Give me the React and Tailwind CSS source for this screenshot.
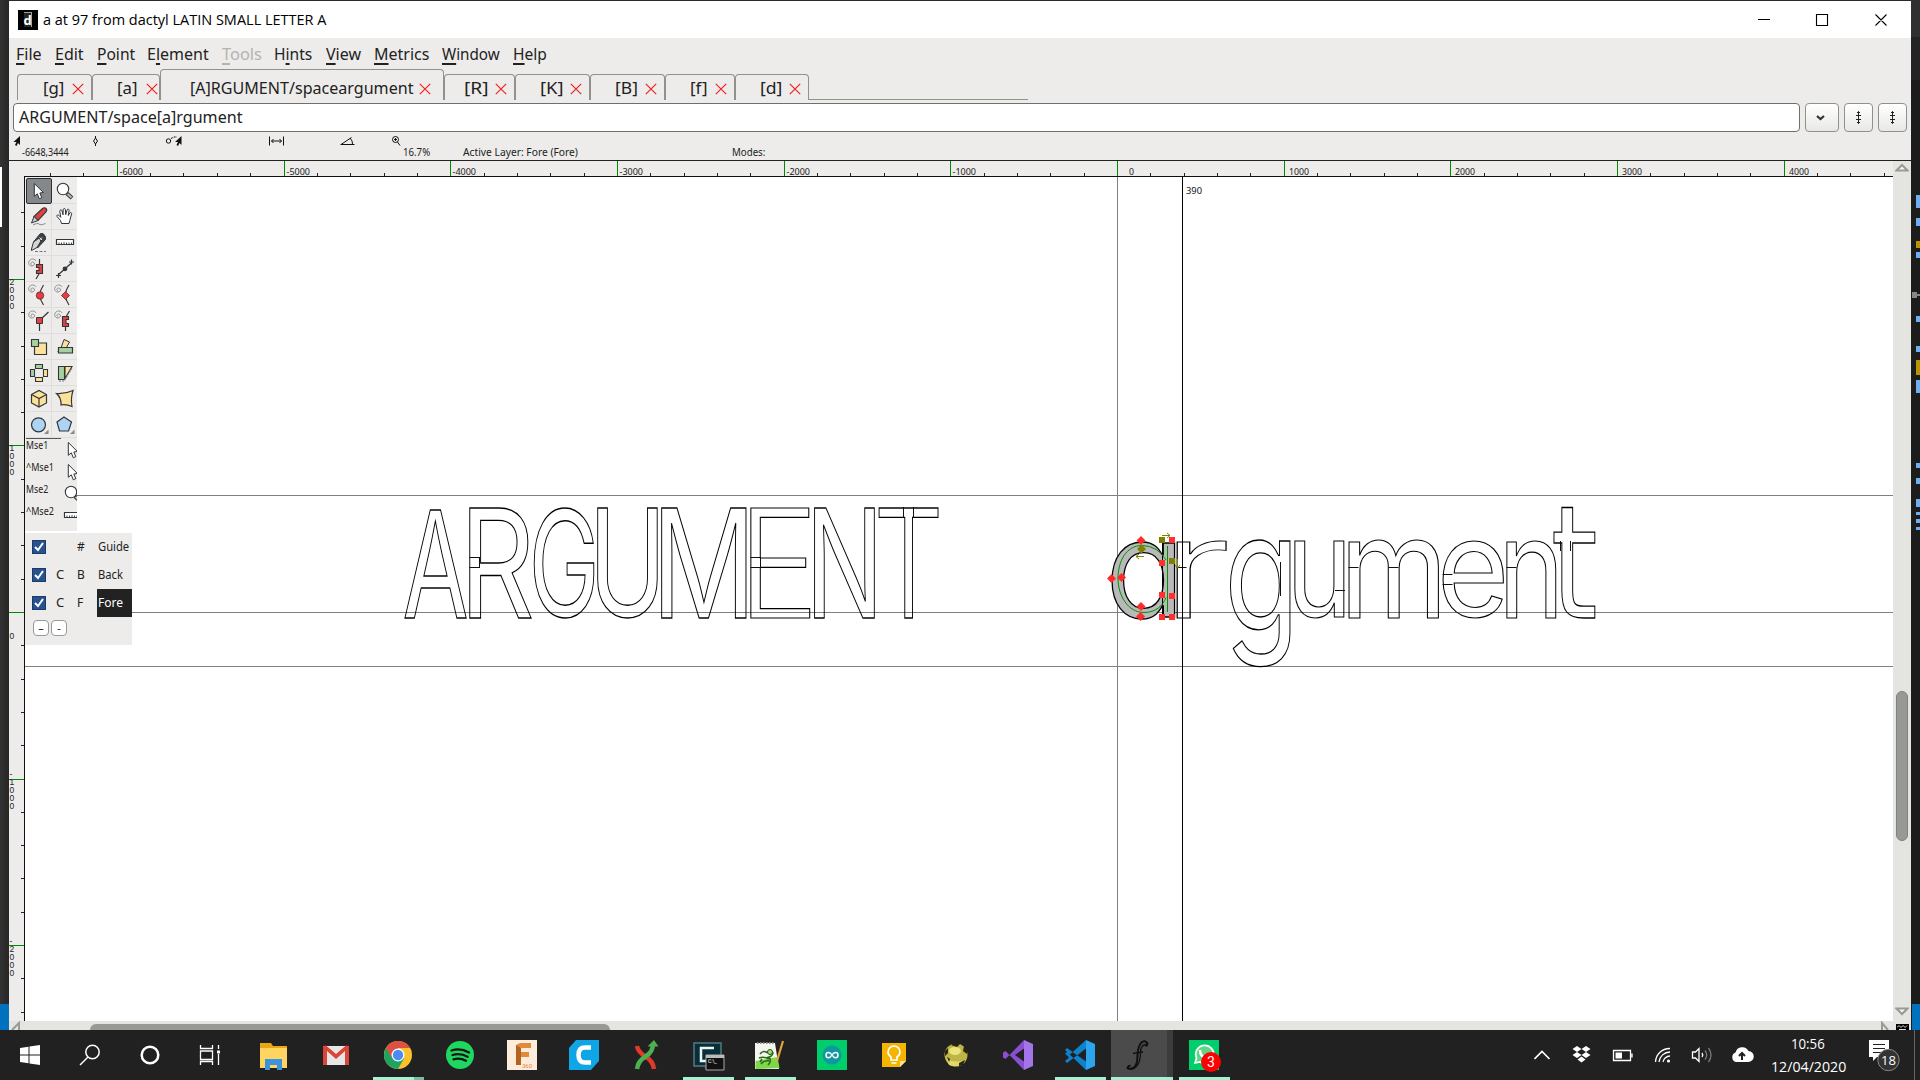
import React, { useLayoutEffect, useRef, useState } from "react";

const UI = "font-['Noto_Sans','DejaVu_Sans',sans-serif]";
const SEGOE = "font-['Open_Sans','Noto_Sans',sans-serif]";

/* Single-line label condensed or widened to fill its own box. */
function Fit({ className, children }) {
  const box = useRef(null);
  const inner = useRef(null);
  const [s, setS] = useState(1);
  useLayoutEffect(() => {
    setS(box.current.clientWidth / inner.current.offsetWidth);
  }, []);
  return (
    <span ref={box} className={"block shrink-0 whitespace-nowrap " + className}>
      <span ref={inner} className="inline-block origin-left" style={{ transform: `scaleX(${s})` }}>
        {children}
      </span>
    </span>
  );
}

/* ---------- title bar ---------- */
function TitleBar() {
  return (
    <div className={"flex h-[37px] shrink-0 items-center bg-white pl-[9px] " + SEGOE}>
      <div className="flex h-5 w-5 items-center justify-center bg-black">
        <div className="flex h-[15px] w-2 items-center justify-center border-r border-t border-gray-400 bg-neutral-800 text-[13px] font-bold leading-none text-white">d</div>
      </div>
      <Fit className="ml-[5px] w-[283px] text-[15px] text-black">a at 97 from dactyl LATIN SMALL LETTER A</Fit>
      <svg className="ml-auto mr-[23px]" width="132" height="14" viewBox="0 0 132 14" fill="none" stroke="#000" strokeWidth="1.1">
        <path d="M2 6.5h12M60.500 1.500h11v11h-11zM119.500 1.500l11 11M130.500 1.500l-11 11" />
      </svg>
    </div>
  );
}

/* ---------- menu ---------- */
const MENU = [
  ["", "F", "ile", "w-[26px]"],
  ["", "E", "dit", "ml-[13px] w-[29px]"],
  ["", "P", "oint", "ml-[13px] w-[38px]"],
  ["E", "l", "ement", "ml-[12px] w-[62px]"],
  ["", "T", "ools", "ml-[13px] w-[40px] text-[#b4b3b1]"],
  ["H", "i", "nts", "ml-[12px] w-[38px]"],
  ["", "V", "iew", "ml-[14px] w-[35px]"],
  ["", "M", "etrics", "ml-[13px] w-[55px]"],
  ["", "W", "indow", "ml-[13px] w-[58px]"],
  ["", "H", "elp", "ml-[13px] w-[34px]"],
];
function MenuBar() {
  return (
    <div className={"flex h-[31px] shrink-0 items-center pl-[7px] text-[16px] text-[#222] " + UI}>
      {MENU.map(([a, b, c, cls]) => (
        <Fit key={a + b + c} className={cls}>
          {a}
          <span className="underline decoration-2 underline-offset-[3px]">{b}</span>
          {c}
        </Fit>
      ))}
    </div>
  );
}

/* ---------- tabs ---------- */
const TABS = [
  ["[g]", "w-[75px] pl-[25px]", "w-[21px]", "ml-[8px]"],
  ["[a]", "w-[68px] pl-[24px]", "w-[21px]", "ml-[8px]"],
  ["[A]RGUMENT/spaceargument", "w-[284px] pl-[29px]", "w-[223px]", "ml-[6px]"],
  ["[R]", "w-[71px] pl-[19px]", "w-[24px]", "ml-[7px]"],
  ["[K]", "w-[75px] pl-[24px]", "w-[23px]", "ml-[7px]"],
  ["[B]", "w-[75px] pl-[24px]", "w-[23px]", "ml-[7px]"],
  ["[f]", "w-[70px] pl-[24px]", "w-[18px]", "ml-[7px]"],
  ["[d]", "w-[74px] pl-[24px]", "w-[22px]", "ml-[7px]"],
];
function Tabs() {
  return (
    <div className={"flex h-[31px] shrink-0 items-end pl-[8px] text-[16px] text-[#222] " + UI}>
      {TABS.map(([t, w, tw, m]) => (
        <div
          key={t}
          className={
            "flex shrink-0 items-center rounded-t border border-b-0 border-[#91918e] " +
            w + (t.length > 5 ? " h-[31px] pt-[5px]" : " h-[26px]")
          }
        >
          <Fit className={"leading-[22px] " + tw}>{t}</Fit>
          <svg className={"mt-[3px] shrink-0 " + m} width="12" height="12" viewBox="0 0 12 12" stroke="#ef2020" strokeWidth="1.200">
            <path d="M.8.8l10.400 10.400M11.200.8L.8 11.200" />
          </svg>
        </div>
      ))}
      <div className="h-px w-[219px] bg-[#91918e]" />
    </div>
  );
}

function WordButton({ className, children }) {
  return (
    <div className={"flex h-[29px] shrink-0 items-center justify-center rounded-[4px] border border-[#90908d] bg-gradient-to-b from-white to-[#e8e8e6] " + className}>
      {children}
    </div>
  );
}
function DoubleDagger() {
  return (
    <svg width="9" height="13" viewBox="0 0 9 13" fill="none" stroke="#222" strokeWidth="1">
      <path d="M4.500.5v12M3 2l1.500-1.500L6 2M2 4.500h5M2 8.500h5M3 11l1.500 1.500L6 11" />
    </svg>
  );
}
function WordBar() {
  return (
    <div className={"flex h-[33px] shrink-0 items-center pl-[4px] text-[16px] text-[#222] " + UI}>
      <div className="flex h-[29px] w-[1787px] shrink-0 items-center rounded-[4px] border border-[#6f6f6f] bg-white pl-[5px]">
        <Fit className="w-[223px] pb-px leading-[25px]">ARGUMENT/space[a]rgument</Fit>
      </div>
      <WordButton className="ml-[5px] w-[34px]">
        <svg className="mr-[3px]" width="9" height="6" viewBox="0 0 9 6" fill="none" stroke="#2e3436" strokeWidth="2.200"><path d="M1 1l3.500 3L8 1" /></svg>
      </WordButton>
      <WordButton className="ml-[5px] w-[29px]"><DoubleDagger /></WordButton>
      <WordButton className="ml-[5px] w-[29px]"><DoubleDagger /></WordButton>
    </div>
  );
}

/* ---------- info line ---------- */
function InfoBar() {
  return (
    <div className={"flex h-[27px] shrink-0 flex-col border-b border-[#222] text-[10px] leading-[12px] text-[#222] " + UI}>
      <svg className="h-[12px] w-[500px] shrink-0" viewBox="9 135 500 12" fill="none" stroke="#111" strokeWidth="1">
        <path d="M20 137v9l-2-2-1.500 3-1.500-1 1.500-3h-3z" fill="#111" stroke="none" />
        <path d="M95.500 137v2M95.500 145v2M93.500 142l2-3 2 3-2 3z" />
        <circle cx="168.500" cy="142" r="2.200" />
        <path d="M171 139.500l3-1.500h3" strokeDasharray="2 1" />
        <path d="M181.500 137v9l-2-2-1.500 3-1.500-1 1.500-3h-3z" fill="#111" stroke="none" />
        <path d="M269.500 137.500v9M283.500 137.500v9M271.500 142h10M273.500 140l-2 2 2 2M279.500 140l2 2-2 2" />
        <path d="M340.500 145.500h14M341 145.500l10.500-7M350 139q3 3 2.500 6.500" />
        <circle cx="395.500" cy="140.500" r="3" />
        <path d="M394 140.500h3M395.500 139v3M397.500 143l2.500 3.500" />
      </svg>
      <div className="flex pl-[13px]">
        <Fit className="w-[47px]">-6648,3444</Fit>
        <Fit className="ml-[334px] w-[27px]">16.7%</Fit>
        <Fit className="ml-[33px] w-[115px]">Active Layer: Fore (Fore)</Fit>
        <Fit className="ml-[154px] w-[33px]">Modes:</Fit>
      </div>
    </div>
  );
}

/* ---------- rulers ---------- */
const STEP = 166.7;
function TopRuler() {
  const minors = [];
  for (let i = -32; i <= 23; i++) if (i % 5 !== 0) minors.push(Math.round(1117 + (i * STEP) / 5) + 0.5);
  return (
    <svg className="h-4 w-[1884px] shrink-0" viewBox="9 161 1884 16">
      <path d={minors.map((x) => `M${x} 173v3`).join("")} stroke="#222" />
      <path d="M24 176.500H1893" stroke="#111" />
      {[-6, -5, -4, -3, -2, -1, 0, 1, 2, 3, 4].map((k) => {
        const x = Math.round(1117 + k * STEP);
        return (
          <g key={k}>
            <path d={`M${x + 0.5} 161v15`} stroke="#008a00" />
            <text x={k < 0 ? x + 2.500 : k === 0 ? x + 12 : x + 5} y="175" textLength={k < 0 ? 23.500 : k === 0 ? 5 : 20} lengthAdjust="spacingAndGlyphs" className={"text-[9.500px] " + UI} fill="#222">
              {k * 1000}
            </text>
          </g>
        );
      })}
    </svg>
  );
}
function SideRuler() {
  const minors = [];
  for (let i = -12; i <= 13; i++) if (i % 5 !== 0) minors.push(Math.round(612 + (i * 166.5) / 5) + 0.5);
  const labels = [["2000", 285], ["1000", 451], ["0", 639], ["-1000", 777], ["-2000", 944]];
  return (
    <svg className="h-full w-4 shrink-0" viewBox="9 177 16 844">
      <path d={minors.map((y) => `M21 ${y}h3`).join("")} stroke="#222" />
      <path d="M24.500 176V1021" stroke="#111" />
      {[279, 445, 612, 779, 945].map((y) => <path key={y} d={`M9 ${y + 0.5}h15`} stroke="#008a00" />)}
      {labels.map(([t, y]) => t.split("").map((c, i) => (
        <text key={t + i} x="9.500" y={y + i * 8} className="font-['Liberation_Sans',sans-serif] text-[8.500px]" fill="#222">{c}</text>
      )))}
    </svg>
  );
}

/* ---------- glyph canvas ---------- */
/* [char, ink left, ink top, ink right, ink bottom, face] in canvas pixels */
const FACES = {
  caps: { font: "400 150px Inter", cls: "font-['Inter',sans-serif] text-[150px] font-normal" },
  wide: { font: "350 150px Inter", cls: "font-['Inter',sans-serif] text-[150px] font-[350]" },
  small: { font: "380 150px Inter", cls: "font-['Inter',sans-serif] text-[150px] font-[380]" },
  tall: { font: "400 150px 'DejaVu Sans'", cls: "font-['DejaVu_Sans',sans-serif] text-[150px] font-normal" },
};
const GLYPHS = [
  ["A", 404.5, 509.5, 466.5, 617.5, "caps"],
  ["R", 469.5, 507.5, 531, 617.5, "caps"],
  ["G", 533.5, 507, 594, 617.5, "caps"],
  ["U", 597.5, 507.5, 657.5, 617.5, "caps"],
  ["M", 661.5, 507.5, 746.5, 617.5, "caps"],
  ["E", 750.5, 507.5, 810.5, 617.5, "wide"],
  ["N", 814.5, 507.5, 874.5, 617.5, "caps"],
  ["T", 878.5, 507.5, 938.5, 617.5, "wide"],
  ["r", 1176.5, 540.5, 1227, 617.5, "wide"],
  ["g", 1230, 540.5, 1290.5, 667.5, "small"],
  ["u", 1294.5, 540.5, 1344.5, 617.5, "small"],
  ["m", 1348.5, 540, 1438.5, 617.5, "small"],
  ["e", 1442.5, 541, 1504, 617.5, "small"],
  ["n", 1506.5, 540, 1556.5, 617.5, "small"],
  ["t", 1554, 507.5, 1595.5, 618, "tall"],
];
function Outline({ g }) {
  const [c, l, t, r, b, face] = g;
  const [m, setM] = useState(null);
  useLayoutEffect(() => {
    const ctx = document.createElement("canvas").getContext("2d");
    ctx.font = FACES[face].font;
    setM(ctx.measureText(c));
  }, [c, face]);
  if (!m) return null;
  const w = m.actualBoundingBoxRight + m.actualBoundingBoxLeft;
  const h = m.actualBoundingBoxAscent + m.actualBoundingBoxDescent;
  const sx = (r - l) / w;
  const sy = (b - t) / h;
  const tx = l + m.actualBoundingBoxLeft * sx;
  const ty = t + m.actualBoundingBoxAscent * sy;
  return (
    <text transform={`translate(${tx} ${ty}) scale(${sx} ${sy})`} className={FACES[face].cls} fill="none" stroke="#000" strokeWidth={1.100 / Math.sqrt(sx * sy)}>
      {c}
    </text>
  );
}
const DIAMONDS = [[1141, 540.5], [1111.5, 578.5], [1121.5, 577.5], [1141, 606.500], [1140.500, 616.500]];
const SQUARES = [[1172, 540], [1162, 563], [1162, 595], [1172, 596], [1162, 617], [1172, 617]];
function GlyphCanvas() {
  return (
    <svg className="block h-[844px] w-[1868px]" viewBox="25 177 1868 844">
      <path d="M25 495.500H1893M25 612.500H1893M25 666.500H1893M1117.500 177V1021" stroke="#808080" fill="none" />
      {GLYPHS.map((g, i) => <Outline key={i} g={g} />)}
      {/* seams where component contours overlap */}
      <path
        d="M469.500 557.500h10M469.500 567.500h10M479.500 557v11M750.500 557.500h10M750.500 567.500h10M760.500 557v11M903.500 507v11M913.500 507v11M1176.500 567.500h10M1335 590.500h10M1348.500 567.500h10M1388.500 567.500h10M1442.500 574.500h10M1442.500 584.500h10M1506.500 567.500h10M1560.500 541v10M1570.500 541v10M1280.500 562v34"
        fill="none"
        stroke="#111"
      />
      <text transform="translate(1105.500 616.500) scale(.86 .905)" className="font-['Inter',sans-serif] text-[150px] font-[380] [font-feature-settings:'cv11']" fill="#b9b9b9" stroke="#000" strokeWidth="1.500">a</text>
      <path d="M1162.500 541v76" stroke="#000" />
      <g fill="none" stroke="#009000">
        <path d="M1167.500 546v66M1166 560q-8-14-24-14.500c-16 0-24 16-24 33s10 34 26 34c12 0 19-7 22-15" />
      </g>
      {DIAMONDS.map(([x, y], i) => <path key={i} d={`M${x - 4.500} ${y}l4.500-4.500 4.500 4.500-4.500 4.500z`} fill="#ff2a2a" />)}
      {SQUARES.map(([x, y], i) => <rect key={i} x={x - 3} y={y - 3} width="6" height="6" fill="#ff3030" />)}
      <g fill="#808000">
        <rect x="1159" y="537" width="6" height="6" />
        <rect x="1169" y="558" width="6" height="6" />
        <path d="M1137 549l4.500-4.500 4.500 4.500-4.500 4.500z" />
      </g>
      <path d="M1162 535.500h8M1167 533l3 2.500-3 2.500M1144 556.500h-8M1139 554l-3 2.500 3 2.500M1177.500 559v9M1175 565l2.500 3 2.500-3" fill="none" stroke="#808000" />
      <path d="M1182.500 177V1021" stroke="#000" />
      <text x="1186" y="194" textLength="16" lengthAdjust="spacingAndGlyphs" className={"text-[9.500px] " + UI} fill="#111">390</text>
    </svg>
  );
}

/* ---------- tool palette ---------- */
const D = "#30363a";
const Spiral = () => <path d="M6 8.500c-1.500 0-1.500-2.500.5-2.500 3 0 2.500 4-.5 4-4.500 0-4.500-6.500.5-7 2 0 3 1 3.500 2" fill="none" stroke="#8b9294" strokeWidth="1" />;
const Arrow = () => <path d="M8.300 5.500v12.800l3-2.500 2 5 2.500-1.200-2-4.600 3.600-.5z" fill="#fff" stroke={D} />;
const Magnifier = () => (
  <g stroke={D}>
    <path d="M15 15.500l5 4.500" strokeWidth="4" />
    <path d="M15.500 16l4 3.600" stroke="#babdb6" strokeWidth="2" />
    <circle cx="11" cy="11" r="5.700" fill="#fff" strokeWidth="1.100" />
  </g>
);
const Ruler = () => (
  <g stroke={D}>
    <path d="M4.500 9.500h17v5h-17z" fill="#fff" strokeWidth="1.200" />
    <path d="M7 14.500v-2M9.500 14.500v-2M12 14.500v-2.500M14.500 14.500v-2M17 14.500v-2M19.500 14.500v-2" strokeWidth=".9" />
  </g>
);
const TOOLS = [
  <Arrow />,
  <Magnifier />,
  <g stroke={D}><path d="M8 12.500l8.500-8q2-1.500 3.500 0t0 3.500l-8 8.500z" fill="#e04040" strokeWidth="1.100" /><path d="M8 12.500l-2.500 6.500 6.500-2.500z" fill="#c9ccc8" /><path d="M7 21c3-1.500 5-2 6-1s3 1 6.500-.5" fill="none" stroke="#888" /></g>,
  <path d="M9.500 19.500l-1-3-3.500-4c-.8-1.300 1-2 1.800-1.200l2 2-1-6c-.2-1.700 1.800-2 2.200-.5l1 4 .2-5.300c.2-1.300 2-1.300 2.200 0l.3 5.200 1.400-4.700c.5-1.300 2.200-.9 2 .5l-.8 5 1.500-2.500c.8-1 2.200-.3 1.800.8l-1.800 6.700-.8 3z" fill="#fff" stroke={D} />,
  <g stroke={D}><path d="M7.500 12L14 4q2-1.500 4 .5t1.500 5l-8 8.500z" fill="#3c4144" /><path d="M7.500 12l-2 7v1.500l5.500-3L15 11l-2.500-2.500z" fill="#d5d6d3" /><path d="M13.500 7.500l2.500 2.500M16 7.500l-2.500 2.500" stroke="#eee" /><path d="M9 21.500h11" strokeDasharray="3 1.500" stroke="#777" /></g>,
  <Ruler />,
  <g stroke={D}><Spiral /><path d="M13.500 3v6M13.500 17l-3.500 6" fill="none" strokeWidth="1.200" /><path d="M10.500 8.500h6v9h-6v-3h2.500v-3h-2.500z" fill="#e04040" strokeWidth="1.100" /></g>,
  <g stroke={D} strokeWidth="1.200" fill="none"><path d="M6 19L20 6.500" /><path d="M17 6h5M19.500 3.500v5M4 19.500h5M6.500 17v5" /><circle cx="13" cy="12.800" r="1.800" fill={D} /></g>,
  <g stroke={D} strokeWidth="1.200"><Spiral /><path d="M17.500 3q-7 10 0 20" fill="none" /><circle cx="14" cy="13.500" r="3.700" fill="#e04040" stroke="#7a2c2c" strokeWidth=".9" /></g>,
  <g stroke={D} strokeWidth="1.200"><Spiral /><path d="M17 3q-7 10 0 20" fill="none" /><path d="M9.500 13.500l4-4 4 4-4 4z" fill="#e04040" stroke="#7a2c2c" strokeWidth=".9" /></g>,
  <g stroke={D} strokeWidth="1.200"><Spiral /><path d="M22.500 4L15 11M13.500 14v9" fill="none" /><path d="M10.500 9.500h6v6h-6z" fill="#e04040" strokeWidth="1" /></g>,
  <g stroke={D} strokeWidth="1.200"><Spiral /><path d="M17.500 3l-3 5M13.500 19v4" fill="none" /><path d="M10.500 8.500h6v3h-2.500v4h2.500v3h-6z" fill="#e04040" strokeWidth="1.100" /></g>,
  <g stroke={D}><path d="M8.500 9h12v11.500h-12z" fill="#fce19b" strokeWidth="1.200" /><path d="M5.500 5.500h7v7h-7z" fill="#a6cfa2" strokeWidth="1.100" /></g>,
  <g stroke={D}><path d="M12 5.500l5.500 2.500-4.500 8-4-2z" fill="#fce19b" /><path d="M9 14l-4 4.500" fill="none" strokeDasharray="2 1" /><path d="M6.500 13.500h14v5.500h-14z" fill="#a6cfa2" strokeWidth="1.200" /></g>,
  <g stroke={D} strokeWidth="1.100"><path d="M9.500 4.500h7v4h-7zM4.500 9.500h4v7h-4z" fill="#a6cfa2" /><path d="M17.500 9.500h4v7h-4zM9.500 17.500h7v4h-7z" fill="#fce19b" /></g>,
  <g stroke={D} strokeWidth="1.100"><path d="M6.500 6.500h6v13h-6z" fill="#a6cfa2" /><path d="M13 6.500h7l-7 12z" fill="#fce19b" /><path d="M7 21h5l8-13" fill="none" strokeDasharray="2 1" stroke="#777" /></g>,
  <g stroke={D} strokeWidth="1.200" fill="#fce19b"><path d="M5.500 8.500l7.500-4 7.500 4v8.500l-7.500 4-7.500-4z" /><path d="M5.500 8.500l7.500 4 7.500-4M13 12.500V21" fill="none" /></g>,
  <path d="M4.500 7.500q9 .5 16.500-3-2.500 8-1 16-6-2.500-11-1.500.5-7-4.500-11.500z" fill="#fce19b" stroke={D} strokeWidth="1.200" />,
  <g><circle cx="12.500" cy="12.800" r="7" fill="#aed4f5" stroke={D} strokeWidth="1.200" /><path d="M22.500 17.500v4.500h-4.500z" fill="#888" /></g>,
  <g><path d="M12 5l7.500 5-3 9h-9l-2.500-9z" fill="#aed4f5" stroke={D} strokeWidth="1.200" /><path d="M22.500 17.500v4.500h-4.500z" fill="#888" /></g>,
];
const MOUSE = [["Mse1", <Arrow />], ["^Mse1", <Arrow />], ["Mse2", <Magnifier />], ["^Mse2", <Ruler />]];
function ToolPalette() {
  return (
    <div className={"absolute left-0 top-0 h-[354px] w-[52px] overflow-hidden bg-[#edeceb] pl-px pt-px text-[10px] text-[#222] " + UI}>
      <div className="grid w-[52px] grid-cols-2">
        {TOOLS.map((t, i) => (
          <div key={i} className={"h-[26px] w-[26px] " + (i === 0 ? "rounded-[2px] border border-[#2c3033] bg-[#84888b]" : "border-b border-r border-[#dfdedc]")}>
            <svg className={i === 0 ? "-m-px h-[26px] w-[26px]" : "h-[26px] w-[26px]"} viewBox="0 0 26 26">{t}</svg>
          </div>
        ))}
      </div>
      <div className="h-px w-[35px] bg-[#555]" />
      {MOUSE.map(([t, icon], i) => (
        <div key={i} className="flex h-[22px] w-[60px] items-start">
          <Fit className={t[0] === "^" ? "w-[28px] leading-[12px]" : "w-[22px] leading-[12px]"}>{t}</Fit>
          <svg className={"-mt-[2px] h-[26px] w-[26px] shrink-0 " + (t[0] === "^" ? "ml-[6px]" : "ml-[12px]")} viewBox="0 0 26 26">{icon}</svg>
        </div>
      ))}
    </div>
  );
}

/* ---------- layers ---------- */
const LAYERS = [["", "#", "Guide"], ["C", "B", "Back"], ["C", "F", "Fore"]];
function Layers() {
  return (
    <div className={"absolute left-0 top-[356px] flex h-[112px] w-[107px] flex-col bg-[#edeceb] text-[13px] text-[#222] " + UI}>
      {LAYERS.map(([c, b, name]) => (
        <div key={name} className="flex h-7 shrink-0 items-center pl-[7px]">
          <div className="flex h-[14px] w-[14px] items-center justify-center border border-[#1b3a66] bg-[#27518f]">
            <svg width="10" height="10" viewBox="0 0 10 10" fill="none" stroke="#fff" strokeWidth="2"><path d="M1 5l3 3 5-7" /></svg>
          </div>
          <span className="w-[30px] pl-[10px]">{c}</span>
          <span className="w-[21px] pl-px text-[12px]">{b}</span>
          <div className={"flex h-7 w-[35px] items-center pl-px " + (name === "Fore" ? "bg-[#222] text-white" : "")}>
            <Fit className={name === "Guide" ? "w-[31px]" : "w-[25px]"}>{name}</Fit>
          </div>
        </div>
      ))}
      <div className="flex gap-[2px] pl-[8px] pt-[3px]">
        <div className="flex h-4 w-4 items-center justify-center rounded-[4px] border border-[#999] bg-white pb-[2px] text-[11px] leading-none">–</div>
        <div className="flex h-4 w-4 items-center justify-center rounded-[4px] border border-[#999] bg-white pb-[2px] text-[11px] leading-none">-</div>
      </div>
    </div>
  );
}

/* ---------- editor strip at the window's right side ---------- */
const MARKS = [
  "mt-[195px] h-[13px] bg-[#6cb0f0]", "mt-[10px] h-[8px] bg-[#6cb0f0]", "mt-[15px] h-[7px] bg-[#b89500]", "mt-[4px] h-[6px] bg-[#6cb0f0]",
  "mt-[36px] h-[2px] bg-[#888]", "mt-[20px] h-[6px] bg-[#6cb0f0]", "mt-[24px] h-[6px] bg-[#6cb0f0]", "mt-[8px] h-[15px] bg-[#b89500]", "mt-[5px] h-[13px] bg-[#6cb0f0]",
  "mt-[70px] h-[5px] bg-[#6cb0f0]", "mt-[10px] h-[6px] bg-[#6cb0f0]", "mt-[15px] h-[8px] bg-[#6cb0f0]", "mt-[5px] h-[3px] bg-[#6cb0f0]", "mt-[4px] h-[4px] bg-[#6cb0f0]", "mt-[4px] h-[3px] bg-[#6cb0f0]",
];

/* ---------- taskbar ---------- */
const APPS = [
  { n: "files", i: <g><path d="M4 6h11l2 3H31v22H4z" fill="#e8a713" /><path d="M4 11H31v20H4z" fill="#ffd461" /><path d="M9 22h17v11h-5v-5h-7v5H9z" fill="#3c93dd" /></g> },
  { n: "mail", i: <g><path d="M5 9h26v19H5z" fill="#e6e6e6" /><path d="M5 9v19h4V14l9 8 9-8v14h4V9l-3-.5-10 8.500L8 8.500z" fill="#db4437" /></g> },
  { n: "browser", u: "split", i: <g><circle cx="18" cy="18" r="14" fill="#fbc02d" /><path d="M18 18L5.900 11A14 14 0 0 1 30.100 11H18z" fill="#dd5144" /><path d="M18 18L5.900 11A14 14 0 0 0 18 32l6-10.500z" fill="#1da462" /><path d="M5.900 11A14 14 0 0 1 30.100 11H18L12 21z" fill="#dd5144" /><circle cx="18" cy="18" r="6.500" fill="#fff" /><circle cx="18" cy="18" r="5.200" fill="#4c8bf5" /></g> },
  { n: "music", i: <g><circle cx="18" cy="18" r="14" fill="#1ed760" /><path d="M9.500 13.500q9-2.800 17.500 2M10.500 18q8-2.300 15 1.800M11.500 22.300q6.500-1.800 12.500 1.500" fill="none" stroke="#191414" strokeWidth="2.300" strokeLinecap="round" /></g> },
  { n: "cad", i: <g><path d="M3 3h30v30H3z" fill="#fdebdc" /><path d="M12 8l4-2h11v5H17v4h8v5h-8v8h-5z" fill="#e08a3a" /><path d="M12 8l5 3v17h-5z" fill="#b5621f" /><text x="18" y="31" className="font-['Roboto',sans-serif] text-[6px]" fill="#e08a3a">360</text></g> },
  { n: "slicer", i: <g><path d="M10 3h23v21l-8 9H3V11z" fill="#0fa5e6" /><path d="M25 10.500h-6q-6.500 0-6.500 7.500t6.500 7.500h6" fill="none" stroke="#fff" strokeWidth="4.500" /></g> },
  { n: "helix", i: <g fill="none" strokeWidth="4.500"><path d="M9 9q1 6 8.500 10.500T26 32" stroke="#e03a2a" /><path d="M9 32q1-8 8.500-12.500T25 7" stroke="#4caf50" /><path d="M19.500 9.500L26 3l4.500 6.500z" fill="#4caf50" stroke="none" /></g> },
  { n: "recorder", u: "full", i: <g><path d="M4 6h27v23H4z" fill="#0a2e38" stroke="#4e7b86" strokeWidth="1.500" /><path d="M24 11H11v13h6" fill="none" stroke="#e7f5f5" strokeWidth="2.500" /><path d="M15 31h8" stroke="#4e7b86" strokeWidth="1.500" /><path d="M16 18h18v15H16z" fill="#111" stroke="#aaa" /><path d="M16 18h18v3H16z" fill="#bbb" /><text x="18" y="26" className="font-['Roboto',sans-serif] text-[5px]" fill="#fff">C:\_</text></g> },
  { n: "notes", u: "full", i: <g transform="translate(-1 0)"><path d="M4 6h20l4 26H4z" fill="#f4f4f0" /><path d="M4.500 24l22-4 2 11-24 1z" fill="#7fd64a" /><path d="M6 6h18" stroke="#888" strokeWidth="2" strokeDasharray="1.500 1.500" /><path d="M9 17q3-4 7-1.500 3-3 6 .5-1 4-6 4.500M8 21q5-2 10 1M10 27q3-4 8-3M18 20q3 4-1 8M11 22l-2 3" fill="none" stroke="#2c6a18" strokeWidth="1.600" /><circle cx="19" cy="15" r="2.500" fill="#9fe070" stroke="#25531a" /><path d="M32 4l-6 20" stroke="#e3a33a" strokeWidth="2.200" /></g> },
  { n: "arduino", i: <g><path d="M3 3h30v30H3z" fill="#00ce6d" /><circle cx="18" cy="18" r="9.500" fill="#11989f" /><path d="M18 18c-2-3.500-6-3.500-6 0s4 3.500 6 0 6-3.500 6 0-4 3.500-6 0z" fill="none" stroke="#fff" strokeWidth="1.500" /></g> },
  { n: "keep", i: <g><path d="M6 6h24v18l-6 6H6z" fill="#f5b400" /><path d="M30 24h-6v6z" fill="#ffe29a" /><path d="M15 23v-3q-3-2-3-5a6 6 0 0 1 12 0q0 3-3 5v3zM15.500 26h5" fill="none" stroke="#fff" strokeWidth="1.700" /></g> },
  { n: "ball", i: <g><circle cx="18" cy="18" r="11.500" fill="#bdb548" /><ellipse cx="17" cy="14" rx="6" ry="4" fill="#e9e47c" /><path d="M8 21q6 5 16 3v3q-6 4-13 1z" fill="#e0d96a" /><path d="M13 8q3-4 9-1l-3 3zM26 9l4 3-1 5-4-3zM7 14l3-3v5l-3 3zM9 20l3 2-1 3zM21 26l6-3-2 5-4 1z" fill="#27240e" /></g> },
  { n: "studio", i: <g><path d="M24 3l9 4v22l-9 4z" fill="#a474e8" /><path d="M24 3L9 18.500 5.500 22 3 20.500v-5L5.500 14 9 17.500 24 33v-8.500L15 18l9-6.500z" fill="#8a4fd0" /></g> },
  { n: "code", u: "full", i: <g><path d="M24 3l9 4v22l-9 4z" fill="#2aa5ee" /><path d="M24 3L8 17.500 5 15l-2 1.500 4 4L3 24l2 2 19-14.500zM24 33L3 13l2-2 19 13.500z" fill="#0d83cd" /></g> },
  { n: "fonts", u: "active", i: <g transform="translate(-5 0)" fill="none" stroke="#111"><path d="M29 7q-3-5-7-1-3 4-3.500 12 0 9-3 12-3 3-7 1 1-3 3-2" strokeWidth="2" /><path d="M14 16.500q5-1 10-1.500M26 8q-4 0-4.500 7 0 9-3 13-3 5-8 4" strokeWidth="1.300" /><circle cx="27.500" cy="8" r="1.200" fill="#111" /></g> },
  { n: "chat", u: "full", i: <g><path d="M3 3h30v30H3z" fill="#00ce6d" /><path d="M9 26l1.500-5A9 9 0 1 1 14 25z" fill="#62d487" stroke="#fff" strokeWidth="1.700" /><path d="M14 13q0 8 8 8" stroke="#fff" strokeWidth="2.500" fill="none" /><circle cx="25" cy="25" r="10" fill="#f00" /><text x="25" y="30" textAnchor="middle" className="font-['Roboto',sans-serif] text-[14px]" fill="#fff">3</text></g> },
];
function Taskbar() {
  return (
    <div className={"flex h-[50px] shrink-0 bg-[#212121] text-white " + SEGOE}>
      <div className="flex w-[243px] shrink-0">
        <div className="flex w-[60px] items-center justify-center"><svg width="20" height="20" viewBox="0 0 20 20" fill="#fff"><path d="M0 3l8.500-1.300v7.800H0zM9.500 1.500L20 0v9.500H9.500zM0 10.500h8.500v7.800L0 17zM9.500 10.500H20V20L9.500 18.500z" /></svg></div>
        <div className="flex w-[60px] items-center justify-center"><svg width="22" height="22" viewBox="0 0 22 22" fill="none" stroke="#fff" strokeWidth="1.500"><circle cx="13.500" cy="8" r="6.700" /><path d="M9 13l-8 8" /></svg></div>
        <div className="flex w-[60px] items-center justify-center"><svg width="20" height="20" viewBox="0 0 20 20" fill="none" stroke="#fff" strokeWidth="2.500"><circle cx="10" cy="10" r="8.300" /></svg></div>
        <div className="flex w-[60px] items-center justify-center"><svg width="22" height="20" viewBox="0 0 22 20" fill="none" stroke="#fff" strokeWidth="1.300"><path d="M1.500 0v3.500h12V0M1.500 6h12v8.500h-12zM1.500 20v-3.500h12V20M19.500 0v4M19.500 9v11" /><path d="M18 5.500h3v3h-3z" fill="#fff" stroke="none" /></svg></div>
      </div>
      {APPS.map((a) => (
        <div key={a.n} className={"flex w-[62px] shrink-0 flex-col items-center justify-between pt-[7px] " + (a.n === "fonts" ? "bg-[linear-gradient(90deg,#4b4b4b_56px,#3c3c3c_56px)]" : "")}>
          <svg width="36" height="36" viewBox="0 0 36 36">{a.i}</svg>
          {a.u === "full" && <div className="h-[3px] w-[51px] bg-[#a4f2ce]" />}
          {a.u === "active" && <div className="h-[3px] w-full bg-[#a4f2ce]" />}
          {a.u === "split" && <div className="flex h-[3px] w-[51px]"><div className="w-[41px] bg-[#a4f2ce]" /><div className="w-[10px] bg-[#7dbd9d]" /></div>}
        </div>
      ))}
      <div className="ml-auto flex items-center">
        <svg width="222" height="22" viewBox="1534 1044 222 22" fill="none" stroke="#fff" strokeWidth="1.300">
          <path d="M1534.500 1059l7.500-7.500 7.500 7.500" strokeWidth="1.600" />
          <path d="M1577 1046l4.500 3-4.500 3-4.500-3zM1586 1046l4.500 3-4.500 3-4.500-3zM1577 1052l4.500 3-4.500 3-4.500-3zM1586 1052l4.500 3-4.500 3-4.500-3zM1581.500 1056.500l4 3-4 3-4-3z" fill="#fff" stroke="none" />
          <path d="M1613.500 1050.500h17v10h-17zM1632 1053.500v4" /><path d="M1615.500 1052.500h6.500v6h-6.500z" fill="#fff" stroke="none" />
          <path d="M1655.500 1062a14 14 0 0 1 14.500-13.500M1659 1062a11 11 0 0 1 11-10M1663 1062a7 7 0 0 1 7-6" /><circle cx="1668.500" cy="1061" r="1.600" fill="#fff" stroke="none" />
          <path d="M1692.500 1052v6h3l3.500 3.500v-13l-3.500 3.500zM1702 1053q1.500 2 0 4" /><path d="M1705 1050.500q3.500 4.500 0 9M1708.500 1048q5 7 0 14" stroke="#777" />
          <path d="M1736 1062a5 5 0 0 1-.5-9.500 7 7 0 0 1 13-1.500 5.500 5.500 0 0 1-.5 11z" fill="#fff" stroke="none" /><path d="M1742 1060v-6M1739 1056l3-3 3 3" stroke="#212121" strokeWidth="2" />
        </svg>
        <div className="ml-[14px] flex w-[76px] flex-col items-center text-[14px] leading-[23px]">
          <Fit className="w-[34px]">10:56</Fit>
          <Fit className="w-[75px]">12/04/2020</Fit>
        </div>
        <svg className="ml-[22px]" width="34" height="34" viewBox="1868 1043 34 34">
          <path d="M1869 1045h20v17h-12l-4 4v-4h-4z" fill="#fff" /><path d="M1873 1049.500h12M1873 1053.500h12M1873 1057.500h8" stroke="#212121" />
          <circle cx="1888.500" cy="1065" r="10.700" fill="#333" stroke="#8a8a8a" />
          <text x="1888.500" y="1070" textAnchor="middle" className="font-['Open_Sans',sans-serif] text-[13px]" fill="#fff">18</text>
        </svg>
        <div className="ml-[12px] h-[50px] w-px bg-[#666]" />
        <div className="w-[5px]" />
      </div>
    </div>
  );
}

export default function App() {
  return (
    <div className="flex h-[1080px] w-[1920px] flex-col overflow-hidden bg-[#212121]">
      <div className="flex h-[1030px] shrink-0">
        <div className="flex w-[9px] shrink-0 flex-col bg-gradient-to-r from-[#333] to-[#262626]">
          <div className="mt-[167px] h-[60px] w-[2px] bg-white" />
          <div className="mt-auto h-[26px] bg-[#0071bd]" />
        </div>
        <div className="flex w-[1902px] shrink-0 flex-col border-t border-[#2a2a2a] bg-[#edeceb]">
          <TitleBar />
          <MenuBar />
          <Tabs />
          <div className="h-px shrink-0" />
          <WordBar />
          <InfoBar />
          <div className="flex h-[860px] shrink-0">
            <div className="flex w-[1884px] shrink-0 flex-col">
              <TopRuler />
              <div className="flex h-[844px] shrink-0">
                <SideRuler />
                <div className="relative w-[1868px] bg-white">
                  <GlyphCanvas />
                  <ToolPalette />
                  <Layers />
                </div>
              </div>
            </div>
            <div className="flex w-[18px] flex-col items-center bg-[#e4e4e1]">
              <svg className="mt-[2px] shrink-0" width="14" height="10" viewBox="0 0 14 10" fill="#f4f4f2" stroke="#999a96" strokeWidth="2"><path d="M1.500 7.500L7 2l5.500 5.500z" /></svg>
              <div className="mt-[518px] h-[150px] w-[12px] shrink-0 rounded-full border border-[#80827e] bg-[#979994]" />
              <svg className="mb-1 mt-auto shrink-0" width="14" height="10" viewBox="0 0 14 10" fill="#f4f4f2" stroke="#999a96" strokeWidth="2"><path d="M1.500 1.500L7 7l5.500-5.500z" /></svg>
            </div>
          </div>
          <div className="flex h-[9px] shrink-0 items-end bg-[#e4e4e1]">
            <svg width="12" height="9" viewBox="0 0 12 9" fill="none" stroke="#999a96" strokeWidth="2"><path d="M10 9V2L3 9" /></svg>
            <div className="ml-[69px] h-[6px] w-[520px] rounded-t-[6px] bg-[#979994]" />
            <svg className="ml-auto" width="10" height="9" viewBox="0 0 10 9" fill="none" stroke="#999a96" strokeWidth="2"><path d="M2 9V2l6 7" /></svg>
            <div className="ml-[6px] mr-[2px] flex h-[6px] w-[13px] items-end justify-center bg-black">
              <svg width="11" height="5" viewBox="0 0 11 5" fill="none" stroke="#ddd"><path d="M0 2.500l2-2 2 2 2-2 2 2 2-2M2 4.500h7" /></svg>
            </div>
          </div>
        </div>
        <div className="relative w-[9px] shrink-0 bg-[#1c1c1c]">
          <div className="h-[37px] bg-[#303030]" />
          <div className="h-[43px] bg-[#242424]" />
          <div className="absolute inset-0 flex flex-col items-end">
            {MARKS.map((c, i) => <div key={i} className={"w-[4px] shrink-0 " + c} />)}
            <div className="mt-auto h-[26px] w-[8px] bg-[#0071bd]" />
          </div>
          <div className="absolute left-[1px] top-[292px] h-[6px] w-[5px] bg-[#888]" />
        </div>
      </div>
      <Taskbar />
    </div>
  );
}
